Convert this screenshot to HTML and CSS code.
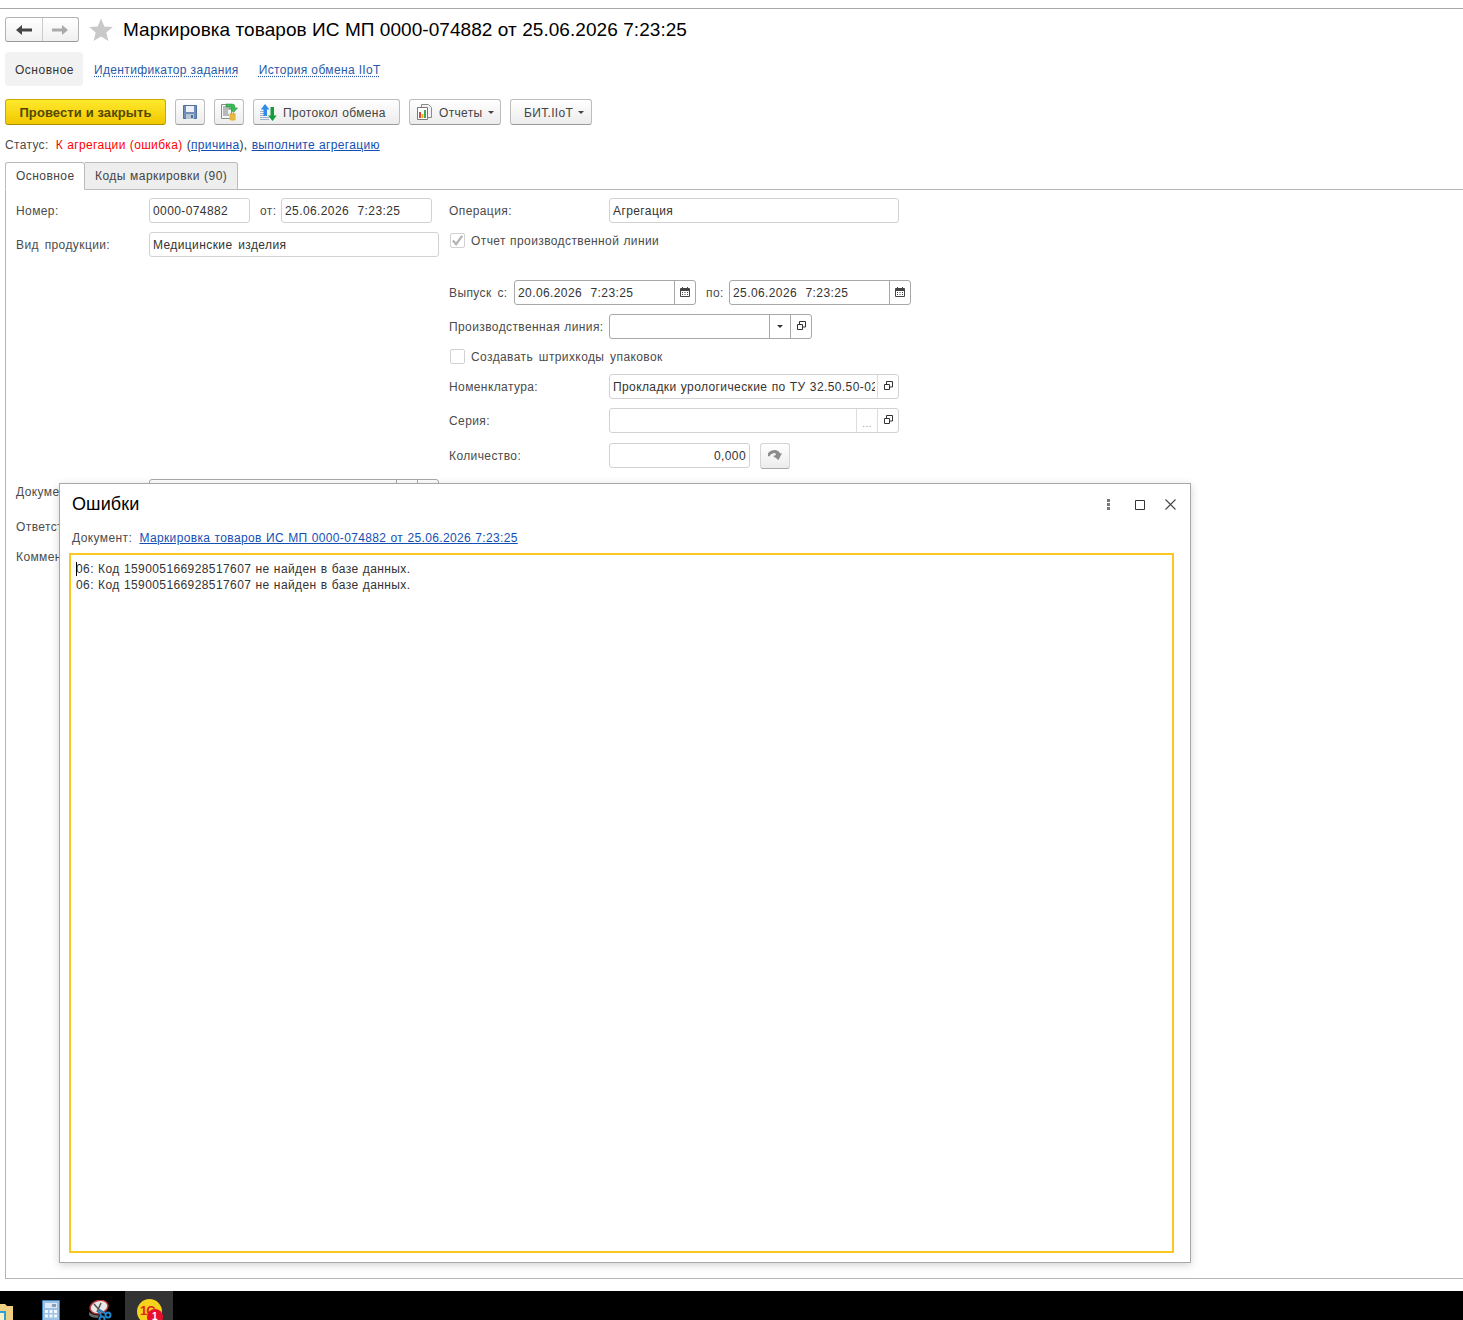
FILE: index.html
```html
<!DOCTYPE html>
<html lang="ru">
<head>
<meta charset="utf-8">
<title>Маркировка товаров</title>
<link rel="stylesheet" href="styles.css">
</head>
<body>
<svg class="defs" width="0" height="0">
  <symbol id="open" viewBox="0 0 9 9"><path d="M2.500 3V.5h6v5.500H6M.5 3.500h5v5h-5z" fill="none" stroke="#333" stroke-width="1"/></symbol>
  <symbol id="cal" viewBox="0 0 10 10"><path d="M.5 1.500h9v8h-9z" fill="#fff" stroke="#444"/><path d="M1 1h8v3H1zM2 0h1v2H2zM7 0h1v2H7z" fill="#444"/><path d="M2 5h1v1H2zM4.500 5h1v1h-1zM7 5h1v1H7zM2 7h1v1H2zM4.500 7h1v1h-1zM7 7h1v1H7z" fill="#444"/></symbol>
</svg>
<div class="page">
  <header class="head">
    <div class="navgroup">
      <span class="navbtn"><svg width="16" height="10" viewBox="0 0 16 10"><path d="M0 5l6-5v3.500h10v3H6V10z" fill="#444"/></svg></span>
      <span class="navbtn"><svg width="16" height="10" viewBox="0 0 16 10"><path d="M16 5l-6-5v3.500H0v3h10V10z" fill="#aaa"/></svg></span>
    </div>
    <svg class="star" width="24" height="24" viewBox="0 0 24 24"><path d="M12 .5l3.300 8 8.500.6-6.500 5.500 2.100 8.400L12 18.400 4.600 23l2.100-8.400L.2 9.100l8.500-.6z" fill="#c9c9c9"/></svg>
    <h1 class="title">Маркировка товаров ИС МП 0000-074882 от 25.06.2026 7:23:25</h1>
  </header>

  <nav class="sections">
    <span class="section current">Основное</span>
    <a class="section dotted">Идентификатор задания</a>
    <a class="section dotted">История обмена IIoT</a>
  </nav>

  <div class="toolbar">
    <button class="btn primary">Провести и закрыть</button>
    <button class="btn square">
      <svg width="14" height="14" viewBox="0 0 14 14"><path d="M.5.500h13v13H.5z" fill="#6f8fb8" stroke="#4f6f9c"/><path d="M3 1h8v6H3z" fill="#eef2f7"/><path d="M3 9h8v5H3z" fill="#b7c4d4"/><path d="M8 10h2v3H8z" fill="#4f6f9c"/></svg>
    </button>
    <button class="btn square">
      <svg width="17" height="18" viewBox="0 0 17 18"><path d="M.5 1.500h10v14H.5z" fill="#f6f6f6" stroke="#8a8a8a"/><path d="M2 4h7M2 6h7M2 8h5M2 10h5M2 12h6" stroke="#7a7a7a"/><path d="M5 1h6q3 0 3 3v1h2.500l-4 4.500-4-4.500H11V4H5z" fill="#3dbb55" stroke="#1f8a38" stroke-width=".5"/><path d="M8.500 11h6v6q-3 1.500-6 0z" fill="#e9bd3a"/><path d="M8.500 11q3-1.500 6 0-3 1.500-6 0zM8.500 13.500q3 1.500 6 0M8.500 15.500q3 1.500 6 0" fill="#f6d76a" stroke="#c4952a" stroke-width=".5"/></svg>
    </button>
    <button class="btn labeled">
      <svg width="17" height="17" viewBox="0 0 17 17"><path d="M0 7h6v1H0zM0 9h6v1H0zM0 11h6v1H0zM0 13h9v1H0zM0 15h9v1H0z" fill="#9fb3ca"/><path d="M5 0l4.500 5.500H7V12H3.500V5.500H.8z" fill="#2f8be6"/><path d="M12.500 17L8 11.500h2.500V3H14v8.500h2.700z" fill="#169c3a"/></svg>
      <span>Протокол обмена</span>
    </button>
    <button class="btn labeled reports">
      <svg width="17" height="17" viewBox="0 0 17 17"><path d="M5.500.5h7l3 3v10h-10z" fill="#f2f2f2" stroke="#8a8a8a"/><path d="M1.500 3.500h10v12h-10z" fill="#fff" stroke="#777"/><path d="M3 8h2v6H3z" fill="#d9493a"/><path d="M5.500 10h2v4h-2z" fill="#e6a42c"/><path d="M8 6h2v8H8z" fill="#3fa94f"/></svg>
      <span>Отчеты</span><i class="caret"></i>
    </button>
    <button class="btn labeled bit"><span>БИТ.IIoT</span><i class="caret"></i></button>
  </div>

  <p class="status">
    <span class="status-label">Статус:</span>
    <span class="err">К агрегации (ошибка)</span> (<a class="link">причина</a>), <a class="link">выполните агрегацию</a>
  </p>

  <div class="tabs">
    <span class="tab active">Основное</span>
    <span class="tab">Коды маркировки (90)</span>
  </div>

  <main class="panel">
    <section class="col-left">
      <div class="row">
        <label class="lbl w133">Номер:</label>
        <span class="field w101">0000-074882</span>
        <label class="lbl mid">от:</label>
        <span class="field w151">25.06.2026&nbsp; 7:23:25</span>
      </div>
      <div class="row">
        <label class="lbl w133 wide">Вид продукции:</label>
        <span class="field w290 wide">Медицинские изделия</span>
      </div>
      <div class="row doc">
        <label class="lbl w133">Документ основание:</label>
        <span class="field strong w290"><span class="grow"></span><span class="cell w21"></span><span class="cell w21"></span></span>
      </div>
      <div class="row lower">
        <label class="lbl w133">Ответственный:</label>
      </div>
      <div class="row comment">
        <label class="lbl w133">Комментарий:</label>
      </div>
    </section>

    <section class="col-right">
      <div class="row">
        <label class="lbl w160">Операция:</label>
        <span class="field w290">Агрегация</span>
      </div>
      <div class="row check-row">
        <span class="check"><svg width="14" height="14" viewBox="0 0 14 14"><path d="M2 6.500l3.500 4L12 1.500" fill="none" stroke="#b5b5b5" stroke-width="2.500"/></svg></span>
        <span class="lbl">Отчет производственной линии</span>
      </div>
      <div class="row release">
        <label class="lbl w65 wide">Выпуск с:</label>
        <span class="field strong w182"><span class="grow">20.06.2026&nbsp; 7:23:25</span><span class="cell w21"><svg width="10" height="10"><use href="#cal"/></svg></span></span>
        <label class="lbl mid2">по:</label>
        <span class="field strong w182"><span class="grow">25.06.2026&nbsp; 7:23:25</span><span class="cell w21"><svg width="10" height="10"><use href="#cal"/></svg></span></span>
      </div>
      <div class="row">
        <label class="lbl w160">Производственная линия:</label>
        <span class="field strong w203"><span class="grow"></span><span class="cell w21"><i class="caret dark"></i></span><span class="cell w21"><svg width="9" height="9"><use href="#open"/></svg></span></span>
      </div>
      <div class="row check-row tight">
        <span class="check"></span>
        <span class="lbl wide">Создавать штрихкоды упаковок</span>
      </div>
      <div class="row">
        <label class="lbl w160">Номенклатура:</label>
        <span class="field w290"><span class="grow clip">Прокладки урологические по ТУ 32.50.50-023</span><span class="cell w21 light"><svg width="9" height="9"><use href="#open"/></svg></span></span>
      </div>
      <div class="row">
        <label class="lbl w160">Серия:</label>
        <span class="field w290"><span class="grow"></span><span class="cell w21 light dots">...</span><span class="cell w21 light"><svg width="9" height="9"><use href="#open"/></svg></span></span>
      </div>
      <div class="row qty">
        <label class="lbl w160">Количество:</label>
        <span class="field w141 right">0,000</span>
        <button class="btn mini"><svg width="14" height="11" viewBox="0 0 14 11"><path d="M0 6Q2 1.500 7.500 1.500" fill="none" stroke="#8c8c8c" stroke-width="3"/><path d="M6 0q5 0 6 3.500l2-.5-3.500 7L5 6l3-1z" fill="#8c8c8c"/></svg></button>
      </div>
    </section>
  </main>

  <footer class="taskbar">
    <span class="task t-folder"><svg width="13" height="18" viewBox="0 0 13 18"><path d="M-2 1h7l2 2h6v15H-2z" fill="#efd083"/><path d="M-2 8h8v10H-2z" fill="#2ba0de"/><path d="M-2 10h6v8h-6z" fill="#f8efc4"/></svg></span>
    <span class="task t-calc"><svg width="18" height="21" viewBox="0 0 18 21"><path d="M.5.500h17v21H.5z" fill="#9cc3e6" stroke="#3f7fb2"/><path d="M3 3h12v5H3z" fill="#dfe9f5"/><path d="M10 4h4v3h-4z" fill="#8a9db5"/><path d="M3 10h3v3H3zM7.500 10h3v3h-3zM12 10h3v3h-3zM3 14.500h3v3H3zM7.500 14.500h3v3h-3zM12 14.500h3v3h-3z" fill="#f4f8fb"/></svg></span>
    <span class="task t-snip"><svg width="23" height="21" viewBox="0 0 23 21"><ellipse cx="10" cy="7" rx="9" ry="6.500" fill="#e8e8e8" stroke="#c23a3a" stroke-width="1.500" transform="rotate(-15 10 7)"/><path d="M5 4l7 8M12 3L8 12" stroke="#555" stroke-width="1.600"/><circle cx="19" cy="15" r="2.500" fill="none" stroke="#1f86c9" stroke-width="2"/><circle cx="13" cy="19" r="2.500" fill="none" stroke="#1f86c9" stroke-width="2"/><path d="M11 10l6 4M9 11l4 6" stroke="#1f86c9" stroke-width="2"/><path d="M0 12q6 4 10 3l-1 3q-7 0-9-3z" fill="#666"/></svg></span>
    <span class="task t-active"><svg width="28" height="21" viewBox="0 0 28 21"><circle cx="12.500" cy="12.500" r="12.500" fill="#f5d21c"/><text x="3" y="16" class="logo-1c">1С</text><circle cx="18" cy="18" r="8" fill="#e8112d"/><text x="15" y="21" class="badge-num">1</text></svg></span>
  </footer>
</div>

<div class="modal" role="dialog">
  <div class="modal-head">
    <h2 class="modal-title">Ошибки</h2>
    <div class="modal-tools">
      <svg class="tool-dots" width="3" height="11" viewBox="0 0 3 11"><path d="M0 0h3v3H0zM0 4h3v3H0zM0 8h3v3H0z" fill="#777"/></svg>
      <svg class="tool-max" width="10" height="10" viewBox="0 0 10 10"><path d="M.5.500h9v9h-9z" fill="none" stroke="#333"/></svg>
      <svg class="tool-close" width="11" height="11" viewBox="0 0 11 11"><path d="M.5.500l10 10M10.500.500l-10 10" stroke="#444" stroke-width="1.100"/></svg>
    </div>
  </div>
  <div class="modal-doc"><span class="status-label">Документ:</span> <a class="link doc-link">Маркировка товаров ИС МП 0000-074882 от 25.06.2026 7:23:25</a></div>
  <div class="errors">
    <div class="err-line"><i class="text-caret"></i>06: Код 159005166928517607 не найден в базе данных.</div>
    <div class="err-line">06: Код 159005166928517607 не найден в базе данных.</div>
  </div>
</div>
</body>
</html>
```
FILE: styles.css
```css
* { box-sizing: border-box; }
html, body { margin: 0; padding: 0; background: #fff; }
body { font: 12px "Liberation Sans", Arial, sans-serif; color: #333; letter-spacing: .4px; word-spacing: .5px; position: relative; height: 1320px; overflow: hidden; }
.defs { position: absolute; }
.page { height: 1320px; display: flex; flex-direction: column; padding-top: 8px; }
a { cursor: pointer; }

.head { border-top: 1px solid #a8a8a8; padding: 8px 0 0 5px; display: flex; align-items: center; height: 34px; flex: none; }
.navgroup { display: flex; width: 74px; height: 25px; border: 1px solid #b3b3b3; border-bottom-color: #999; border-radius: 3px; background: linear-gradient(#fff, #f0f0f0); }
.navbtn { flex: 1; display: flex; align-items: center; justify-content: center; }
.navbtn + .navbtn { border-left: 1px solid #ccc; }
.star { margin-left: 10px; }
.title { margin: 0 0 0 10px; font-size: 19px; font-weight: 400; color: #000; letter-spacing: .06px; word-spacing: 0; white-space: nowrap; }

.sections { display: flex; margin: 10px 0 0 5px; height: 34px; flex: none; }
.section { display: flex; align-items: center; padding: 1px 10px 0; color: #2a5aa8; letter-spacing: .35px; word-spacing: 0; }
.section.current { background: #f2f2f2; border-radius: 4px; color: #333; letter-spacing: .5px; padding: 1px 10px 0; width: 78px; }
.dotted { text-decoration: underline dotted; text-underline-offset: 2px; }
.section.dotted { margin-left: 1px; }
.section.dotted + .section.dotted { margin-left: 0; }

.toolbar { display: flex; margin: 13px 0 0 5px; height: 26px; flex: none; }
.btn { font: inherit; letter-spacing: inherit; word-spacing: inherit; color: #444; height: 26px; padding: 0; display: flex; align-items: center; justify-content: center; border: 1px solid #bdbdbd; border-bottom-color: #9a9a9a; border-radius: 3px; background: linear-gradient(#fff, #ececec); }
.primary { width: 161px; font-weight: 700; font-size: 13px; letter-spacing: .1px; word-spacing: 0; color: #544800; background: linear-gradient(#ffe92c, #f0c800); border-color: #c9a900; border-bottom-color: #a88e00; }
.square { width: 30px; margin-left: 9px; }
.labeled { margin-left: 9px; justify-content: flex-start; padding: 1px 0 0 6px; gap: 6px; letter-spacing: .33px; }
.labeled:nth-child(4) { width: 147px; }
.labeled svg { margin-top: -1px; }
.reports { width: 92px; }
.bit { width: 82px; padding-left: 13px; margin-left: 9px; gap: 5px; }
.caret { display: inline-block; width: 0; height: 0; border: 3px solid transparent; border-top: 3px solid #444; border-bottom: 0; margin-left: 0; }
.caret.dark { border-top-color: #333; }

.status { margin: 13px 0 0 5px; height: 15px; line-height: 15px; flex: none; letter-spacing: .33px; }
.status-label { color: #4b4b4b; margin-right: 3px; }
.err { color: #f00; }
.link { color: #1450b4; text-decoration: underline; }
.doc-link { letter-spacing: .36px; }

.tabs { display: flex; margin: 9px 0 0 5px; height: 28px; flex: none; position: relative; margin-bottom: -1px; }
.tab { height: 28px; padding: 0 10px; display: flex; align-items: center; background: #eee; border: 1px solid #bbb; border-left: 0; border-radius: 0 3px 0 0; color: #444; letter-spacing: .45px; }
.tab.active { background: #fff; border-left: 1px solid #bbb; border-bottom-color: #fff; border-radius: 3px 3px 0 0; position: relative; z-index: 1; width: 80px; }

.panel { height: 1090px; flex: none; margin-left: 5px; border: 1px solid #b5b5b5; border-right: 0; padding: 8px 0 0 10px; display: flex; }
.col-left { width: 433px; display: flex; flex-direction: column; gap: 9px; }
.col-right { display: flex; flex-direction: column; gap: 9px; }
.row { display: flex; align-items: center; height: 25px; flex: none; }
.doc { margin-top: 213px; }
.lower { margin-top: 1px; }
.comment { margin-top: -4px; }
.lbl { color: #4b4b4b; white-space: nowrap; }
.wide { word-spacing: 2px; }
.w133 { width: 133px; }
.w160 { width: 160px; }
.w65 { width: 65px; }
.mid { width: 31px; padding-left: 10px; }
.mid2 { width: 33px; padding-left: 10px; }
.field { height: 25px; display: flex; align-items: center; border: 1px solid #d2d2d2; border-radius: 3px; background: #fff; padding-left: 3px; color: #333; white-space: nowrap; flex: none; }
.field.strong { border-color: #a8a8a8; }
.w101 { width: 101px; }
.w151 { width: 151px; }
.w290 { width: 290px; }
.w182 { width: 182px; }
.w203 { width: 203px; }
.w141 { width: 141px; }
.right { justify-content: flex-end; padding-right: 3px; }
.grow { flex: 1; min-width: 0; }
.clip { overflow: hidden; margin-right: 2px; }
.cell { height: 23px; display: flex; align-items: center; justify-content: center; border-left: 1px solid #a8a8a8; flex: none; }
.cell svg { margin-bottom: 2px; }
.cell.light { border-left-color: #ddd; }
.w21 { width: 21px; }
.dots { color: #999; align-items: flex-end; padding-bottom: 3px; font-size: 10px; }

.check-row { height: 17px; gap: 6px; padding-left: 1px; }
.check { width: 15px; height: 15px; border: 1px solid #d2d2d2; border-radius: 2px; display: flex; align-items: center; justify-content: center; background: #fff; }
.release { margin-top: 22px; }
.qty { margin-top: 1px; }
.mini { width: 30px; margin-left: 10px; border-color: #d5d5d5; border-bottom-color: #aaa; }

.taskbar { flex: 1; margin-top: 12px; background: #000; height: 29px; display: flex; overflow: hidden; position: relative; }
.task { display: block; height: 29px; flex: none; }
.task svg { display: block; overflow: hidden; }
.t-folder { margin-top: 12px; width: 13px; }
.t-calc { margin: 9px 0 0 29px; width: 18px; }
.t-snip { margin: 9px 0 0 29px; width: 23px; }
.t-active { width: 48px; margin-left: 13px; background: #333; padding: 8px 0 0 12px; }
.logo-1c { font: 700 13px "Liberation Sans", sans-serif; fill: #e0261c; letter-spacing: -1px; }
.badge-num { font: 700 10px "Liberation Sans", sans-serif; fill: #fff; letter-spacing: 0; }

.modal { position: absolute; left: 59px; top: 483px; width: 1132px; height: 780px; background: #fff; border: 1px solid #a8a8a8; box-shadow: 0 2px 8px rgba(0,0,0,.18); padding: 0 16px 9px 9px; display: flex; flex-direction: column; }
.modal-head { display: flex; justify-content: space-between; align-items: center; height: 41px; flex: none; padding: 0 0 0 3px; }
.modal-title { margin: 0; font-size: 18px; font-weight: 400; color: #000; letter-spacing: .1px; word-spacing: 0; }
.modal-tools { display: flex; align-items: center; margin-right: -2px; }
.tool-max { margin-left: 25px; }
.tool-close { margin-left: 20px; }
.modal-doc { height: 16px; line-height: 16px; margin: 5px 0 7px 3px; flex: none; }
.errors { flex: 1; border: 2px solid #fac81e; padding: 6px 5px; color: #333; letter-spacing: .4px; word-spacing: .5px; }
.err-line { height: 16px; line-height: 16px; position: relative; }
.text-caret { position: absolute; left: 0; top: 1px; width: 1px; height: 14px; background: #000; }
```
